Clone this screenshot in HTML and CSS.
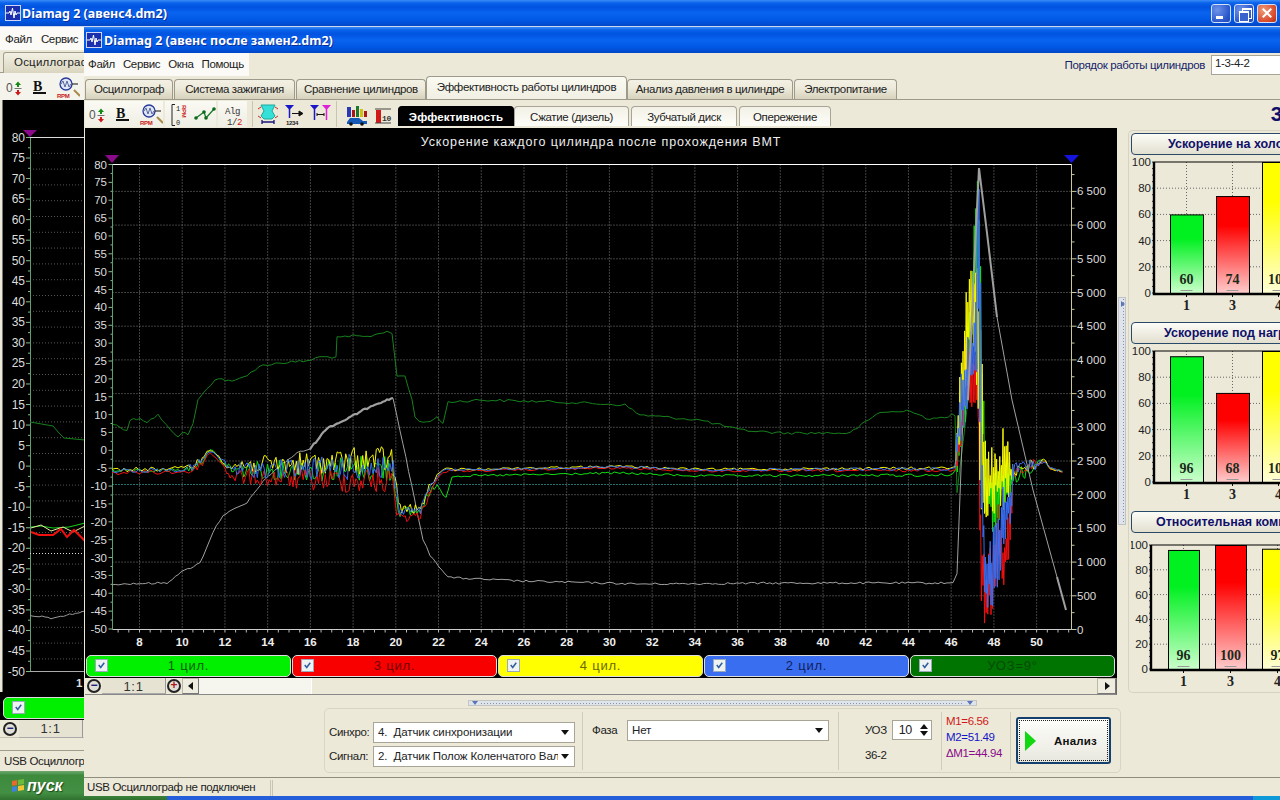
FILE: index.html
```html
<!DOCTYPE html>
<html lang="ru">
<head>
    <meta charset="UTF-8">
    <meta name="viewport" content="width=device-width, initial-scale=1.0">
    <title>Diamag 2</title>
    <link rel="stylesheet" href="styles.css">
</head>
<body>
    <svg class="defs" width="0" height="0">
        <symbol id="app-icon" viewBox="0 0 16 16">
            <rect x="0.5" y="0.5" width="15" height="15" fill="#1a2fb0" stroke="#cfd6f5"/>
            <path d="M1 8h3l1-2 1 4 1.500-7 1.500 10 1-7 1 4 1-2h3" fill="none" stroke="#fff"/>
        </symbol>
        <symbol id="ico-zero" viewBox="0 0 24 26">
            <text x="4" y="18" class="ico-text">0</text>
            <path d="M13 11l3-3.500 3 3.500h-2v2h-2v-2z" fill="#138a13"/>
            <path d="M12.500 14.500h7" stroke="#777"/>
            <path d="M15 16v2h-2l3 3.500 3-3.500h-2v-2z" fill="#d01818"/>
        </symbol>
        <symbol id="ico-bold" viewBox="0 0 26 26">
            <text x="7" y="17" class="ico-b">B</text>
            <path d="M7 19h13" stroke="#111" stroke-width="2"/>
        </symbol>
        <symbol id="ico-rpm" viewBox="0 0 28 26">
            <path d="M22 16l6 6" stroke="#a98a4a" stroke-width="2"/>
            <circle cx="14" cy="10" r="6" fill="#dfe6f5" stroke="#2a3a9a" stroke-width="1.300"/>
            <path d="M9 10l2-3 2 6 2-6 2 6 2-3" fill="none" stroke="#5a6a9a"/>
            <path d="M20 10h6" stroke="#111"/>
            <text x="5" y="24" class="ico-rpm-text">RPM</text>
        </symbol>
        <symbol id="ico-range" viewBox="0 0 25 26">
            <path d="M10 3.500H7v21h3" fill="none" stroke="#222"/>
            <text x="11" y="10" class="ico-small">1</text>
            <text x="11" y="24" class="ico-small">0</text>
            <text transform="translate(17 4) rotate(90)" class="ico-rpm-text">RPM</text>
        </symbol>
        <symbol id="ico-zigzag" viewBox="0 0 26 26">
            <path d="M6 17l8-6 2 6 8-9" fill="none" stroke="#1a7a2a" stroke-width="1.300"/>
            <circle cx="6" cy="17" r="1.800" fill="#0d6a1d"/>
            <circle cx="14" cy="11" r="1.800" fill="#0d6a1d"/>
            <circle cx="16" cy="17" r="1.800" fill="#0d6a1d"/>
            <circle cx="24" cy="8" r="1.800" fill="#0d6a1d"/>
        </symbol>
        <symbol id="ico-alg" viewBox="0 0 29 26">
            <text x="7" y="13" class="ico-alg">Alg</text>
            <text x="9" y="24" class="ico-alg">1/<tspan fill="#d01818">2</tspan></text>
        </symbol>
        <symbol id="ico-lift" viewBox="0 0 26 26">
            <path d="M6 4h14l-3 6 3 5-3 3H9l-3-3 3-5z" fill="#35e0d8" stroke="#1aa9a0"/>
            <path d="M3 8l3-2M23 8l-3-2M3 15l3 2M23 15l-3 2" stroke="#d02828"/>
            <path d="M7 21h12M7 19v4M19 19v4" stroke="#14147a" stroke-width="1.300"/>
        </symbol>
        <symbol id="ico-cursor" viewBox="0 0 26 26">
            <path d="M4 4h9l-4.500 5z" fill="#1818c8"/>
            <path d="M8.500 8v9" stroke="#1818c8" stroke-width="1.500"/>
            <path d="M11 12.500h9M18 10l4 2.500-4 2.500z" stroke="#111" fill="#111"/>
            <text x="5" y="24" class="ico-tiny">1234</text>
        </symbol>
        <symbol id="ico-delta" viewBox="0 0 26 26">
            <path d="M3 4h9l-4.500 5z" fill="#1818c8"/>
            <path d="M7.500 8v11" stroke="#1818c8" stroke-width="1.500"/>
            <path d="M15 4h9l-4.500 5z" fill="#e020d8"/>
            <path d="M19.500 8v11" stroke="#e020d8" stroke-width="1.500"/>
            <path d="M10 13.500h7M10 12v3M17 12v3" stroke="#111"/>
        </symbol>
        <symbol id="ico-car" viewBox="0 0 34 26">
            <path d="M8 6h4v10H8z" fill="#2a3ab0"/>
            <path d="M13 9h3v7h-3z" fill="#a81818"/>
            <path d="M17 5h3v11h-3z" fill="#1a7a2a"/>
            <path d="M21 8h3v8h-3z" fill="#d0c018"/>
            <path d="M25 10h3v6h-3z" fill="#a81818"/>
            <path d="M8 21l3-4h9l4 3h4v3H8z" fill="#1458b8"/>
            <circle cx="12" cy="23" r="1.800" fill="#111"/>
            <circle cx="23" cy="23" r="1.800" fill="#111"/>
        </symbol>
        <symbol id="ico-ten" viewBox="0 0 20 26">
            <path d="M3 9h5v13H3z" fill="#d01818"/>
            <path d="M2 8h16M2 22h16" stroke="#444"/>
            <text x="9" y="20" class="ico-ten">10</text>
        </symbol>
        <symbol id="check-mark" viewBox="0 0 14 14">
            <path d="M3.500 6.500l2.500 3 4.500-6" fill="none" stroke="#2f5f9f" stroke-width="2"/>
        </symbol>
    </svg>

    <!-- back window -->
    <div class="window window-back">
        <div class="titlebar">
            <svg class="app-icon"><use href="#app-icon"/></svg>
            <span class="title">Diamag 2 (авенс4.dm2)</span>
            <div class="win-buttons">
                <span class="win-btn win-min"></span>
                <span class="win-btn win-restore"></span>
                <span class="win-btn win-close"></span>
            </div>
        </div>
        <div class="back-menu">
            <span>Файл</span><span>Сервис</span>
        </div>
        <div class="back-tabs"><span class="back-tab">Осциллограф</span></div>
        <div class="back-toolbar">
            <svg width="24" height="26"><use href="#ico-zero"/></svg>
            <svg width="26" height="26"><use href="#ico-bold"/></svg>
            <svg width="28" height="26"><use href="#ico-rpm"/></svg>
        </div>
        <div class="back-scope"><svg id="backChart" width="82" height="590" viewBox="2 101 82 590"></svg></div>
        <div class="back-legend">
            <div class="legend-item legend-green">
                <span class="check"><svg><use href="#check-mark"/></svg></span>
            </div>
        </div>
        <div class="back-zoom">
            <span class="round-btn">&minus;</span>
            <span class="zoom-value">1:1</span>
        </div>
        <div class="back-status"><span>USB Осциллограф</span></div>
    </div>

    <div class="taskbar">
        <div class="start">
            <svg class="flag" viewBox="0 0 14 14">
                <path d="M1 2l5-1v5l-5 1z" fill="#e8692a"/>
                <path d="M7 1l6-1v5l-6 1z" fill="#6cbb3c"/>
                <path d="M1 8l5-1v5l-5 1z" fill="#3f82e0"/>
                <path d="M7 7l6-1v5l-6 1z" fill="#f2c531"/>
            </svg>
            <span>пуск</span>
        </div>
        <div class="tray"></div>
    </div>

    <!-- front window -->
    <div class="window window-front">
        <div class="titlebar">
            <svg class="app-icon"><use href="#app-icon"/></svg>
            <span class="title">Diamag 2 (авенс после замен2.dm2)</span>
        </div>

        <div class="menubar">
            <div class="menu">
                <span>Файл</span><span>Сервис</span><span>Окна</span><span>Помощь</span>
            </div>
            <label class="cyl-order">Порядок работы цилиндров</label>
            <div class="cyl-input">1-3-4-2</div>
        </div>

        <div class="tabs">
            <span class="tab tab-scope">Осциллограф</span>
            <span class="tab tab-spark">Система зажигания</span>
            <span class="tab tab-compare">Сравнение цилиндров</span>
            <span class="tab tab-active">Эффективность работы цилиндров</span>
            <span class="tab tab-press">Анализ давления в цилиндре</span>
            <span class="tab tab-power">Электропитание</span>
        </div>

        <div class="toolbar">
            <div class="tb-group tb-light">
                <svg width="24" height="26"><use href="#ico-zero"/></svg>
                <svg width="26" height="26"><use href="#ico-bold"/></svg>
                <svg width="28" height="26"><use href="#ico-rpm"/></svg>
            </div>
            <div class="tb-group tb-light">
                <svg width="25" height="26"><use href="#ico-range"/></svg>
                <svg width="26" height="26"><use href="#ico-zigzag"/></svg>
            </div>
            <div class="tb-group tb-light tb-alg">
                <svg width="29" height="26"><use href="#ico-alg"/></svg>
            </div>
            <div class="tb-group tb-sep">
                <svg width="26" height="26"><use href="#ico-lift"/></svg>
                <svg width="26" height="26"><use href="#ico-cursor"/></svg>
                <svg width="26" height="26"><use href="#ico-delta"/></svg>
            </div>
            <div class="tb-group tb-sep">
                <svg width="34" height="26"><use href="#ico-car"/></svg>
                <svg width="20" height="26"><use href="#ico-ten"/></svg>
            </div>
            <div class="subtabs">
                <span class="subtab subtab-active">Эффективность</span>
                <span class="subtab subtab-press">Сжатие (дизель)</span>
                <span class="subtab subtab-disc">Зубчатый диск</span>
                <span class="subtab subtab-adv">Опережение</span>
            </div>
            <span class="big-num">3</span>
        </div>

        <div class="workarea">
            <div class="scope-col">
                <div class="scope">
                    <svg id="mainChart" class="main-chart" width="1032" height="527" viewBox="85 128 1032 527"></svg>
                    <div class="legend">
                        <div class="legend-item legend-green">
                            <span class="check"><svg><use href="#check-mark"/></svg></span>1 цил.
                        </div>
                        <div class="legend-item legend-red">
                            <span class="check"><svg><use href="#check-mark"/></svg></span>3 цил.
                        </div>
                        <div class="legend-item legend-yellow">
                            <span class="check"><svg><use href="#check-mark"/></svg></span>4 цил.
                        </div>
                        <div class="legend-item legend-blue">
                            <span class="check"><svg><use href="#check-mark"/></svg></span>2 цил.
                        </div>
                        <div class="legend-item legend-uoz">
                            <span class="check"><svg><use href="#check-mark"/></svg></span>УОЗ=9°
                        </div>
                    </div>
                </div>
                <div class="scrollrow">
                    <span class="round-btn">&minus;</span>
                    <span class="zoom-value">1:1</span>
                    <span class="round-btn round-plus">+</span>
                    <span class="scroll-arrow arrow-left"></span>
                    <span class="scroll-track"></span>
                    <span class="scroll-thumb"></span>
                    <span class="scroll-arrow arrow-right"></span>
                </div>
            </div>

            <div class="vsplit"><span class="vsplit-arrow"></span></div>

            <div class="cards">
                <section class="card">
                    <h3 class="card-title title-idle">Ускорение на холостом ходу</h3>
                    <svg class="bars" id="bars1" width="150" height="167"></svg>
                </section>
                <section class="card">
                    <h3 class="card-title title-load">Ускорение под нагрузкой</h3>
                    <svg class="bars" id="bars2" width="150" height="167"></svg>
                </section>
                <section class="card">
                    <h3 class="card-title title-comp">Относительная компрессия</h3>
                    <svg class="bars" id="bars3" width="150" height="167"></svg>
                </section>
            </div>
        </div>

        <div class="hsplit"><span class="hsplit-arrow"></span><span class="hsplit-dots"></span><span class="hsplit-arrow"></span></div>

        <div class="panel">
            <div class="panel-group group-sync">
                <div class="field-row">
                    <span class="field-label">Синхро:</span>
                    <div class="combo"><span class="combo-text">4.&nbsp; Датчик синхронизации</span><i class="combo-arrow"></i></div>
                </div>
                <div class="field-row">
                    <span class="field-label">Сигнал:</span>
                    <div class="combo"><span class="combo-text">2.&nbsp; Датчик Полож Коленчатого Вала</span><i class="combo-arrow"></i></div>
                </div>
            </div>
            <div class="panel-group group-phase">
                <span class="field-label">Фаза</span>
                <div class="combo combo-wide"><span class="combo-text">Нет</span><i class="combo-arrow"></i></div>
            </div>
            <div class="panel-group group-uoz">
                <div class="uoz-row">
                    <span>УОЗ</span>
                    <div class="spinner">10<span class="spin-arrows"><i class="spin-up"></i><i class="spin-down"></i></span></div>
                </div>
                <span>36-2</span>
            </div>
            <div class="panel-group group-m">
                <span class="m1">M1=6.56</span>
                <span class="m2">M2=51.49</span>
                <span class="dm1">&Delta;M1=44.94</span>
            </div>
            <button class="run-btn" type="button"><i class="run-arrow"></i><span>Анализ</span></button>
        </div>

        <div class="statusbar">
            <span class="status-main">USB Осциллограф не подключен</span>
        </div>
    </div>

    <script src="app.js"></script>
</body>
</html>
```

FILE: styles.css
```css
* {
  box-sizing: border-box;
}

html, body {
  margin: 0;
  height: 100%;
}

body {
  position: relative;
  width: 1280px;
  height: 800px;
  overflow: hidden;
  font-family: 'Liberation Sans', Arial, sans-serif;
  font-size: 11.5px;
  letter-spacing: -0.35px;
  color: #222;
  background: #245edb;
}

.defs {
  position: absolute;
}

/* icon text */
.ico-text { font: 12px 'Liberation Sans', sans-serif; fill: #555; }
.ico-b { font: bold 14px 'Liberation Serif', serif; fill: #111; }
.ico-rpm-text { font: bold 6px 'Liberation Sans', sans-serif; fill: #c81818; }
.ico-small { font: 7px 'Liberation Mono', monospace; fill: #222; }
.ico-alg { font: 9px 'Liberation Mono', monospace; fill: #333; }
.ico-tiny { font: bold 6px 'Liberation Sans', sans-serif; fill: #222; }
.ico-ten { font: bold 8px 'Liberation Mono', monospace; fill: #333; }

/* windows */
.window {
  position: absolute;
  background: #ece9d8;
  overflow: hidden;
}

.window-back {
  left: 0;
  top: 0;
  width: 1280px;
  height: 771px;
}

.window-front {
  left: 84px;
  top: 27px;
  width: 1196px;
  height: 769px;
  display: flex;
  flex-direction: column;
}

.titlebar {
  height: 26px;
  flex: none;
  display: flex;
  align-items: center;
  padding-left: 2px;
  background: linear-gradient(#3a8cf6 0, #0a62ea 3px, #0053e0 7px, #0a64f0 13px, #0058e4 20px, #0047c8 26px);
}

.window-back .titlebar {
  padding-left: 5px;
  border-bottom: 1px solid #cdd8ee;
  height: 27px;
  position: relative;
}

.app-icon {
  width: 16px;
  height: 16px;
  flex: none;
}

.title {
  margin-left: 1px;
  font: bold 12.5px 'Noto Sans', sans-serif;
  color: #fff;
  letter-spacing: 0;
  text-shadow: 1px 1px 0 #0a2f9a;
  white-space: nowrap;
}

.window-front .title {
  margin-left: 2px;
}

.win-buttons {
  margin-left: auto;
  margin-right: 3px;
  display: flex;
  gap: 3px;
}

.win-btn {
  position: relative;
  width: 20px;
  height: 19px;
  border: 1px solid #d5e1f8;
  border-radius: 3px;
  background: radial-gradient(circle at 30% 30%, #6f94e8, #2a56cc 70%, #2347b0);
}

.win-close {
  background: radial-gradient(circle at 30% 30%, #ee9a78, #d8482a 70%, #b03018);
}

.win-min::after {
  content: '';
  position: absolute;
  left: 4px;
  bottom: 3px;
  width: 7px;
  height: 3px;
  background: #fff;
}

.win-restore::before, .win-restore::after {
  content: '';
  position: absolute;
  width: 8px;
  height: 8px;
  border: 1px solid #fff;
  border-top-width: 2px;
}

.win-restore::before {
  left: 7px;
  top: 3px;
}

.win-restore::after {
  left: 4px;
  top: 6px;
  background: #3a62cc;
}

.win-close::before, .win-close::after {
  content: '';
  position: absolute;
  left: 3px;
  top: 7px;
  width: 12px;
  height: 2px;
  background: #fff;
  transform: rotate(45deg);
}

.win-close::after {
  transform: rotate(-45deg);
}

/* back window parts */
.back-menu {
  height: 23px;
  display: flex;
  align-items: center;
  gap: 9px;
  padding-left: 5px;
  background: #fbfaf6;
}

.back-tabs {
  height: 23px;
  padding: 2px 0 0 3px;
  border-bottom: 1px solid #a09d8c;
}

.back-tab {
  display: block;
  width: 90px;
  height: 21px;
  padding: 3px 0 0 10px;
  letter-spacing: 0.2px;
  border: 1px solid #a09d8c;
  border-bottom: none;
  border-radius: 3px 3px 0 0;
  background: linear-gradient(#f3f1e4, #d9d5bf);
}

.back-toolbar {
  height: 27px;
  display: flex;
  align-items: center;
  padding-left: 2px;
  background: #f5f4ec;
}

.back-scope {
  height: 592px;
  margin-left: 2px;
  padding-top: 1px;
  background: #000;
  border-left: 1px solid #777;
  width: 110px;
}

.back-scope svg {
  display: block;
}

.back-legend {
  height: 28px;
  width: 110px;
  padding: 5px 0 0 3px;
  background: #000;
}

.back-legend .legend-item {
  width: 200px;
  height: 22px;
}

.back-zoom {
  height: 18px;
  display: flex;
  align-items: center;
  padding-left: 3px;
  border-bottom: 1px solid #c8c5b4;
}

.back-zoom .zoom-value {
  width: 64px;
  margin-left: 2px;
}

.back-status {
  margin-top: 12px;
  height: 21px;
  padding: 4px 0 0 4px;
  border-top: 1px solid #a09d8c;
}

/* taskbar */
.taskbar {
  position: absolute;
  left: 0;
  right: 0;
  bottom: 0;
  height: 29px;
  display: flex;
  background: linear-gradient(#3f8cf3, #245edb 20%, #245edb);
}

.start {
  width: 167px;
  display: flex;
  align-items: center;
  gap: 2px;
  padding-left: 11px;
  color: #fff;
  letter-spacing: 0;
  font: italic bold 16px 'Liberation Sans', sans-serif;
  text-shadow: 1px 1px 1px #1a4a1a;
  background: linear-gradient(#6fa86f, #3d8a3d 15%, #438f43 75%, #2f702f);
}

.flag {
  width: 14px;
  height: 14px;
}

.tray {
  margin-left: auto;
  width: 27px;
  background: #0e9ad8;
}

/* menu */
.menubar {
  height: 23px;
  flex: none;
  display: flex;
  align-items: center;
}

.menu {
  width: 165px;
  height: 23px;
  display: flex;
  align-items: center;
  gap: 8px;
  padding: 0 0 2px 4px;
  background: #fbfaf6;
}

.cyl-order {
  margin-left: auto;
  margin-top: 1px;
  color: #14246a;
}

.cyl-input {
  width: 80px;
  height: 20px;
  margin-left: 6px;
  margin-right: -11px;
  padding: 1px 3px;
  background: #fff;
  border: 1px solid #a8a596;
}

/* tabs */
.tabs {
  height: 24px;
  flex: none;
  display: flex;
  align-items: flex-end;
  padding-left: 1px;
  gap: 1px;
  border-bottom: 1px solid #9d9a8b;
}

.tab {
  height: 20px;
  padding-top: 3px;
  text-align: center;
  white-space: nowrap;
  border: 1px solid #9d9a8b;
  border-bottom: none;
  border-radius: 4px 4px 0 0;
  background: linear-gradient(#f3f1e4, #eeebdc 40%, #d6d2bc);
}

.tab-scope { width: 88px; }
.tab-spark { width: 121px; }
.tab-compare { width: 130px; }
.tab-press { width: 166px; }
.tab-power { width: 103px; }

.tab-active {
  width: 201px;
  height: 23px;
  margin: 0 -1px 0 -1px;
  padding-top: 4px;
  background: linear-gradient(#fbfaf2, #f1efe3);
}

/* toolbar */
.toolbar {
  height: 27px;
  flex: none;
  display: flex;
  align-items: center;
  padding-left: 1px;
  gap: 1px;
  background: #ece9d8;
}

.tb-group {
  display: flex;
  height: 26px;
}

.tb-light {
  background: linear-gradient(#fafaf4, #efeee4);
  margin-right: 1px;
}

.tb-alg {
  margin-right: 4px;
}

.tb-sep {
  padding-left: 2px;
  margin-right: 2px;
  border-left: 1px solid #c8c5b4;
}

.tb-group svg {
  display: block;
  flex: none;
}

.subtabs {
  display: flex;
  align-items: flex-end;
  align-self: flex-end;
  height: 21px;
  margin: 0 0 1px 2px;
}

.subtab {
  height: 20px;
  padding-top: 4px;
  text-align: center;
  white-space: nowrap;
  border: 1px solid #a8a596;
  border-bottom: none;
  border-radius: 4px 4px 0 0;
  background: linear-gradient(#f3f1e6, #fdfdf8);
}

.subtab-active {
  width: 116px;
  color: #fff;
  font-weight: bold;
  letter-spacing: 0.1px;
  background: #000;
  border-color: #000;
}

.subtab-press { width: 115px; margin-right: 2px; }
.subtab-disc { width: 106px; margin-right: 2px; }
.subtab-adv { width: 92px; }

.big-num {
  margin-left: auto;
  margin-right: -2px;
  color: #10106a;
  font: bold 21px 'Liberation Sans', sans-serif;
}

/* work area */
.workarea {
  height: 573px;
  flex: none;
  display: flex;
  padding-top: 1px;
}

.scope-col {
  width: 1034px;
  flex: none;
  padding-left: 1px;
}

.scope {
  width: 1032px;
  height: 550px;
  background: #000;
}

.main-chart {
  display: block;
}

.legend {
  display: flex;
  gap: 1px;
  padding-left: 1px;
}

.legend-item {
  position: relative;
  width: 205px;
  height: 22px;
  border-radius: 5px;
  border: 1px solid #ddd;
  text-align: center;
  font-size: 13px;
  letter-spacing: 0.8px;
  line-height: 20px;
}

.legend-green { background: #00f000; color: #0c5a0c; }
.legend-red { background: #f80000; color: #700000; }
.legend-yellow { background: #ffff00; color: #6a6a00; }
.legend-blue { background: #3a6ef0; color: #10205e; }
.legend-uoz { background: #007400; color: #064a06; }

.check {
  position: absolute;
  left: 8px;
  top: 3px;
  width: 13px;
  height: 13px;
  background: #eef2f2;
  border: 1px solid #9ab;
}

.check svg {
  display: block;
  width: 11px;
  height: 11px;
}

.scrollrow {
  height: 17px;
  display: flex;
  align-items: stretch;
  margin-right: 1px;
  padding-left: 2px;
  border-right: 1px solid #666;
  border-bottom: 1px solid #888;
}

.round-btn {
  width: 14px;
  height: 14px;
  margin-top: 1px;
  flex: none;
  border: 2px solid #222;
  border-radius: 50%;
  background: #e0dfd6;
  color: #14147a;
  text-align: center;
  letter-spacing: 0;
  font: bold 12px/9px 'Liberation Sans', sans-serif;
}

.round-plus {
  margin: 1px 1px 0 1px;
  color: #b01818;
}

.zoom-value {
  width: 64px;
  margin-left: 1px;
  text-align: center;
  font-size: 13px;
  letter-spacing: 0.7px;
  line-height: 17px;
  color: #333;
  background: #e6e3d3;
  border-right: 1px solid #999;
  border-bottom: 1px solid #aaa;
  flex: none;
}

.scroll-arrow {
  position: relative;
  width: 17px;
  flex: none;
  background: #efede0;
  border: 1px solid #bbb8a6;
  border-right-color: #777;
  border-bottom-color: #777;
}

.scroll-arrow::after {
  content: '';
  position: absolute;
  top: 3px;
  left: 5px;
  border: 4px solid transparent;
  border-left: none;
  border-right: 5px solid #111;
}

.arrow-right {
  width: 19px;
}

.arrow-right::after {
  left: 7px;
  border-left: 5px solid #111;
  border-right: none;
}

.scroll-track {
  width: 112px;
  flex: none;
  background: #f6f5ee;
}

.scroll-thumb {
  flex: 1;
  background: #ece9d8;
  border-left: 1px solid #fff;
}

/* right side */
.vsplit {
  position: relative;
  width: 8px;
  height: 228px;
  flex: none;
  margin-top: 169px;
  margin-left: 0;
  background-color: #dfe3ea;
  background-image: linear-gradient(#8a90a8 50%, transparent 50%);
  background-size: 1px 3px;
  background-position: 4px 10px;
  background-repeat: repeat-y;
  border: 1px solid #bfc2c8;
}

.vsplit-arrow {
  position: absolute;
  top: 3px;
  left: 2px;
  border: 3px solid transparent;
  border-left: 4px solid #5a76b8;
  border-right: none;
}

.cards {
  width: 290px;
  flex: none;
  margin: 2px 0 0 2px;
  height: 563px;
  padding: 2px 0 0 2px;
  border: 1px solid #d6d3c2;
  border-right: none;
  border-radius: 5px 0 0 5px;
}

.card {
  height: 189px;
}

.card-title {
  width: 290px;
  height: 22px;
  margin: 0;
  text-align: left;
  letter-spacing: 0;
  font: bold 12.5px/20px 'Liberation Sans', sans-serif;
  color: #10106a;
  white-space: nowrap;
  border: 1px solid #2a4a6a;
  border-radius: 4px;
  background: linear-gradient(#fdfdf8, #e2dfcf);
}

.title-idle { padding-left: 36px; }
.title-load { padding-left: 32px; }
.title-comp { padding-left: 24px; }

.bars {
  display: block;
}

/* bottom panel */
.hsplit {
  width: 509px;
  height: 6px;
  margin-left: 384px;
  flex: none;
  display: flex;
  align-items: center;
  padding: 0 3px;
  gap: 3px;
  background: #dfe3ea;
  border: 1px solid #c4c5c5;
}

.hsplit-dots {
  flex: 1;
  height: 1px;
  background-image: linear-gradient(90deg, #8a90a8 50%, transparent 50%);
  background-size: 3px 1px;
}

.hsplit-arrow {
  border: 3px solid transparent;
  border-top: 4px solid #5a76b8;
  border-bottom: none;
}

.panel {
  width: 797px;
  height: 65px;
  margin: 2px 0 0 240px;
  flex: none;
  display: flex;
  align-items: center;
  padding-left: 4px;
  border: 1px solid #d8d5c4;
  border-radius: 5px;
}

.panel-group {
  height: 58px;
  flex: none;
  border-right: 1px solid #d0cdbc;
}

.group-sync {
  width: 254px;
  display: flex;
  flex-direction: column;
  justify-content: flex-end;
  gap: 3px;
  padding-bottom: 3px;
}

.field-row {
  display: flex;
  align-items: center;
  gap: 4px;
}

.field-label {
  width: 40px;
}

.combo {
  width: 202px;
  height: 21px;
  display: flex;
  align-items: center;
  background: #fff;
  border: 1px solid #a8a596;
  padding-left: 4px;
  overflow: hidden;
}

.combo-text {
  flex: 1;
  overflow: hidden;
  white-space: nowrap;
  letter-spacing: -0.1px;
}

.combo-arrow {
  flex: none;
  width: 0;
  margin: 0 5px 0 3px;
  border: 4px solid transparent;
  border-top: 5px solid #111;
  border-bottom: none;
}

.group-phase {
  width: 256px;
  display: flex;
  gap: 0;
  padding: 8px 0 0 9px;
}

.group-phase .field-label {
  width: 35px;
  margin-top: 4px;
}

.group-uoz {
  width: 103px;
  padding: 8px 0 0 26px;
  display: flex;
  flex-direction: column;
  gap: 9px;
}

.uoz-row {
  display: flex;
  align-items: center;
  gap: 5px;
}

.spinner {
  width: 40px;
  height: 20px;
  display: flex;
  align-items: center;
  justify-content: space-between;
  padding: 0 3px 0 6px;
  font-size: 12.5px;
  background: #fff;
  border: 1px solid #a8a596;
}

.spin-arrows {
  display: flex;
  flex-direction: column;
  gap: 2px;
}

.spin-up, .spin-down {
  border: 4px solid transparent;
  border-bottom: 5px solid #111;
  border-top: none;
}

.spin-down {
  border-top: 5px solid #111;
  border-bottom: none;
}

.group-m {
  width: 69px;
  padding: 3px 0 0 4px;
  display: flex;
  flex-direction: column;
  gap: 3px;
  line-height: 13px;
  white-space: nowrap;
}

.m1 { color: #d01818; }
.m2 { color: #1414c8; }
.dm1 { color: #8a0a8a; }

.run-btn {
  width: 95px;
  height: 47px;
  margin-left: 5px;
  display: flex;
  align-items: center;
  padding: 0 0 0 7px;
  border: 2px solid #14406e;
  outline: 1px dotted #222;
  outline-offset: -4px;
  border-radius: 3px;
  font: bold 11.5px 'Liberation Sans', sans-serif;
  letter-spacing: 0.2px;
  color: #111;
  background: linear-gradient(#fdfdfa, #e9e8df);
}

.run-arrow {
  width: 0;
  margin-right: 18px;
  border: 10px solid transparent;
  border-left: 11px solid #12d812;
  border-right: none;
}

/* status */
.statusbar {
  height: 19px;
  margin-top: auto;
  flex: none;
  display: flex;
  border-top: 1px solid #8f8d7e;
  padding-top: 2px;
}

.status-main {
  width: 189px;
  padding: 1px 0 0 3px;
  white-space: nowrap;
  border-right: 3px double #c8c5b4;
}
```

FILE: app.js
```js
// charts of the two Diamag windows, all coordinates are page pixels
const NS = 'http://www.w3.org/2000/svg';

function add(parent, tag, attrs, text) {
  const node = document.createElementNS(NS, tag);
  for (const k in attrs) node.setAttribute(k, attrs[k]);
  if (text !== undefined) node.textContent = text;
  parent.appendChild(node);
  return node;
}

let seed = 12345;
function rnd() {
  seed = (seed * 1103515245 + 12345) % 2147483648;
  return seed / 2147483648;
}
const noise = () => rnd() * 2 - 1;

function line(svg, pts, color, width) {
  add(svg, 'polyline', {
    points: pts.map(p => p[0].toFixed(1) + ',' + p[1].toFixed(1)).join(' '),
    fill: 'none', stroke: color, 'stroke-width': width || 1
  });
}

// walk along a polyline and shake it a little
function jitter(pts, step, amp) {
  const out = [];
  for (let i = 0; i < pts.length - 1; i++) {
    const a = pts[i], b = pts[i + 1];
    const n = Math.max(1, Math.round((b[0] - a[0]) / step));
    for (let j = 0; j < n; j++) {
      const t = j / n;
      out.push([a[0] + (b[0] - a[0]) * t, a[1] + (b[1] - a[1]) * t + noise() * amp]);
    }
  }
  out.push(pts[pts.length - 1]);
  return out;
}

function lerpTable(table, x) {
  let i = 0;
  while (i < table.length - 2 && x > table[i + 1][0]) i++;
  const a = table[i], b = table[i + 1];
  const t = Math.min(1, Math.max(0, (x - a[0]) / (b[0] - a[0])));
  return a.slice(1).map((v, k) => v + (b[k + 1] - v) * t);
}

const LABEL = { 'font-family': 'Liberation Sans', 'font-size': 11.5, 'letter-spacing': 0, fill: '#ddd' };
const DOT = { stroke: '#808080', 'stroke-dasharray': '1 2', 'stroke-width': 1 };

/* main chart */
const main = document.getElementById('mainChart');
const X = v => 139.5 + (v - 8) * 21.36;
const YL = v => 164.5 + (80 - v) * 3.573;
const YR = r => 629.5 - r * 0.0674;
const PLOT = { l: 112.5, r: 1071.5, t: 164.5, b: 629.5 };

add(main, 'text', Object.assign({}, LABEL, {
  x: 601, y: 146, 'text-anchor': 'middle', 'font-size': 12.5, 'letter-spacing': 0.88, fill: '#eee'
}), 'Ускорение каждого цилиндра после прохождения ВМТ');

for (let v = 8; v <= 50; v += 2) {
  add(main, 'line', Object.assign({ x1: X(v), x2: X(v), y1: PLOT.t, y2: PLOT.b }, DOT));
  add(main, 'text', Object.assign({}, LABEL, {
    x: X(v), y: 646, 'text-anchor': 'middle', 'font-weight': 'bold', fill: '#eee'
  }), v);
}
for (let v = 7; v <= 51.5; v += 0.5) {
  add(main, 'line', { x1: X(v), x2: X(v), y1: PLOT.b, y2: PLOT.b + 3, stroke: '#bbb' });
}
for (let r = 500; r <= 6500; r += 500) {
  add(main, 'line', Object.assign({ x1: PLOT.l, x2: PLOT.r, y1: YR(r), y2: YR(r) }, DOT));
}
for (let r = 0; r <= 6500; r += 500) {
  const txt = r >= 1000 ? Math.floor(r / 1000) + ' ' + String(r % 1000).padStart(3, '0') : r;
  add(main, 'text', Object.assign({}, LABEL, { x: 1077, y: YR(r) + 4 }), txt);
  add(main, 'line', { x1: PLOT.r, x2: PLOT.r + 5, y1: YR(r), y2: YR(r), stroke: '#c8c89a' });
  add(main, 'line', { x1: PLOT.r, x2: PLOT.r + 3, y1: YR(r + 250), y2: YR(r + 250), stroke: '#c8c89a' });
}
for (let v = 80; v >= -50; v -= 5) {
  add(main, 'text', Object.assign({}, LABEL, { x: 107, y: YL(v) + 4, 'text-anchor': 'end' }), v);
  add(main, 'line', { x1: PLOT.l - 4, x2: PLOT.l, y1: YL(v), y2: YL(v), stroke: '#7fbf8f' });
  if (v > -50) add(main, 'line', { x1: PLOT.l - 2, x2: PLOT.l, y1: YL(v - 2.5), y2: YL(v - 2.5), stroke: '#7fbf8f' });
}
add(main, 'line', { x1: PLOT.l, x2: PLOT.l, y1: PLOT.t, y2: PLOT.b, stroke: '#5f9f6f' });
add(main, 'line', { x1: PLOT.r, x2: PLOT.r, y1: PLOT.t, y2: PLOT.b, stroke: '#c8c89a' });
add(main, 'line', { x1: PLOT.l, x2: PLOT.r, y1: PLOT.t, y2: PLOT.t, stroke: '#fff' });
add(main, 'line', { x1: PLOT.l, x2: PLOT.r, y1: PLOT.b, y2: PLOT.b, stroke: '#ccc' });
add(main, 'line', {
  x1: PLOT.l, x2: PLOT.r, y1: 484.5, y2: 484.5, stroke: '#40e0d8', 'stroke-dasharray': '1 2'
});

add(main, 'path', { d: 'M105 155h14l-7 8z', fill: '#8a0a8a' });
add(main, 'path', { d: 'M1064 155h15l-7.500 8z', fill: '#1414e0' });

// UOZ curve
line(main, jitter([
  [113, 424], [127, 430], [130, 420], [140, 418], [147, 422], [158, 415], [170, 430], [178, 436],
  [182, 432], [188, 435], [193, 423], [198, 400], [215, 379], [222, 379], [232, 382], [243, 377],
  [263, 365], [280, 363], [307, 361], [320, 357], [336, 357], [337, 338], [353, 336], [367, 337],
  [387, 331], [392, 333], [395, 360], [397, 376], [405, 376], [412, 400], [415, 417], [423, 423],
  [437, 418], [443, 423], [448, 402], [480, 400], [520, 401], [560, 402], [625, 405], [640, 415],
  [700, 420], [740, 430], [780, 433], [850, 433], [880, 412], [900, 412], [910, 410], [930, 420],
  [952, 415], [955, 416], [957, 493], [968, 400], [972, 300]
], 4, 1.3), '#16801c');

// RPM curve
line(main, jitter([
  [112, 584], [167, 583], [178, 574], [200, 563], [213, 532], [223, 515], [247, 503], [260, 485],
  [277, 468], [297, 453], [310, 449]
], 3, 1), '#a0a0a0');
line(main, jitter([[310, 449], [327, 428], [343, 421], [373, 405], [393, 398]], 2, 0.8), '#a0a0a0', 2.2);
line(main, jitter([
  [393, 398], [400, 430], [423, 540], [430, 555], [448, 577], [457, 578], [520, 581], [640, 584],
  [800, 583], [953, 583], [957, 573], [963, 417], [968, 400]
], 3, 1), '#a0a0a0');

const BAND = [
  [112, 471, 3], [180, 470, 3], [192, 468, 5], [203, 460, 4], [211, 450, 3], [222, 462, 4],
  [232, 470, 10], [290, 470, 14], [388, 468, 20], [393, 470, 20], [396, 495, 14], [400, 512, 8],
  [420, 512, 6], [427, 495, 6], [433, 482, 4], [445, 470, 2], [460, 470, 1.5], [620, 467, 1.5],
  [700, 470, 1.5], [950, 469, 2], [955, 467, 2]
];
const SETTLE = [
  [1013, 472, 8], [1020, 468, 7], [1032, 466, 7], [1040, 463, 3], [1044, 460, 2], [1050, 468, 1.5], [1063, 472, 1]
];
const CYL = [
  { color: '#10e010', off: 0, low: 6, spike: [
    [955, 470, 470], [960, 400, 480], [968, 320, 400], [975, 205, 300], [978, 170, 300], [981, 280, 420],
    [986, 460, 540], [996, 450, 530], [1008, 445, 510], [1012, 470, 490], [1014, 470, 490]] },
  { color: '#f01010', off: 9, low: 0, spike: [
    [955, 470, 470], [960, 420, 470], [965, 330, 420], [972, 340, 410], [978, 360, 420], [981, 520, 610],
    [985, 560, 630], [992, 540, 620], [998, 500, 570], [1004, 530, 590], [1010, 490, 550], [1013, 460, 490]] },
  { color: '#f8f800', off: -6, low: 0, spike: [
    [955, 467, 467], [960, 360, 440], [966, 290, 400], [972, 250, 360], [977, 255, 400], [981, 330, 560],
    [985, 440, 530], [995, 440, 520], [1008, 420, 510], [1012, 462, 490], [1014, 462, 480]] },
  { color: '#3a6ef0', off: -1, low: 0, spike: [
    [955, 468, 468], [958, 400, 470], [965, 340, 420], [972, 330, 400], [978, 170, 400], [980, 170, 540],
    [982, 450, 560], [985, 540, 615], [992, 520, 625], [997, 510, 590], [1004, 480, 560], [1011, 470, 520],
    [1013, 460, 490]] }
];
CYL.forEach(c => {
  const pts = [];
  for (let x = 112; x < 955; ) {
    const [y, a] = lerpTable(BAND, x);
    // green falls behind after the dip at 22
    let g = x > 428 ? c.low : 0;
    if (c.low && x > 438 && x < 452) g += 24 * (1 - Math.abs(x - 445) / 7);
    pts.push([x, y + c.off * (a / 14) + noise() * a * 0.75 + g]);
    x += a > 4 ? 1.7 : 3;
  }
  let up = false;
  for (let x = 955; x < 1013; x += 0.8) {
    const [top, bottom] = lerpTable(c.spike, x);
    up = !up;
    const t = rnd() * 0.45;
    pts.push([x, up ? top + (bottom - top) * t : bottom - (bottom - top) * t]);
  }
  for (let x = 1013; x < 1063; x += 1.7) {
    const [y, a] = lerpTable(SETTLE, x);
    pts.push([x, y + noise() * a + (c.low && x < 1035 ? 5 : 0)]);
  }
  line(main, pts, c.color);
});

// RPM peak lies over the cylinders
line(main, [[968, 400], [975, 250], [979, 168], [987, 233], [997, 317]], '#a0a0a0', 2);
line(main, [[997, 317], [1012, 400], [1033, 490], [1057, 577]], '#a0a0a0');
line(main, [[1057, 577], [1066, 610]], '#a0a0a0', 2);

/* part of the back window chart that is still visible */
const back = document.getElementById('backChart');
const YB = v => 137.5 + (80 - v) * 4.108;
for (let y = 137.5; y < 671; y += 15.8) {
  add(back, 'line', { x1: 29, x2: 84, y1: y, y2: y, stroke: '#555', 'stroke-dasharray': '1 2' });
}
for (let v = 80; v >= -50; v -= 5) {
  add(back, 'text', Object.assign({}, LABEL, { x: 24, y: YB(v) + 4, 'text-anchor': 'end', 'font-size': 12 }), v);
  add(back, 'line', { x1: 25, x2: 29, y1: YB(v), y2: YB(v), stroke: '#7fbf8f' });
  if (v > -50) add(back, 'line', { x1: 27, x2: 29, y1: YB(v - 2.5), y2: YB(v - 2.5), stroke: '#7fbf8f' });
}
add(back, 'line', { x1: 29.5, x2: 29.5, y1: 137, y2: 672, stroke: '#5f9f6f' });
add(back, 'line', { x1: 29, x2: 84, y1: 137.5, y2: 137.5, stroke: '#ddd' });
add(back, 'line', { x1: 29, x2: 84, y1: 671.5, y2: 671.5, stroke: '#aaa' });
add(back, 'line', { x1: 29, x2: 84, y1: 553.5, y2: 553.5, stroke: '#ddd', 'stroke-dasharray': '1 2' });
add(back, 'path', { d: 'M22 130h14l-7 7z', fill: '#8a0a8a' });
add(back, 'text', Object.assign({}, LABEL, { x: 75, y: 687, 'font-weight': 'bold' }), '1');
line(back, [[29, 422], [52, 426], [58, 433], [63, 438], [84, 440]], '#16801c');
line(back, jitter([[29, 615], [50, 618], [84, 611]], 3, 1), '#999');
line(back, [[30, 527], [40, 526], [52, 528], [68, 527], [84, 523]], '#18d018');
line(back, [[30, 528], [40, 525], [50, 531], [62, 527], [72, 532], [84, 526]], '#e8e8a0');
line(back, [[30, 532], [38, 535], [52, 535], [60, 529], [66, 537], [73, 530], [84, 541]], '#f01010', 2);

/* bar charts on the right, drawn relative to the card */
const GRADS = { g: ['#00f020', '#ccffcc'], r: ['#ff0000', '#ffcccc'], y: ['#ffff00', '#ffffd8'] };

function bars(id, o) {
  const svg = document.getElementById(id);
  const defs = add(svg, 'defs', {});
  Object.keys(GRADS).forEach(k => {
    const g = add(defs, 'linearGradient', { id: id + k, x1: 0, y1: 0, x2: 0, y2: 1 });
    add(g, 'stop', { offset: '0.3', 'stop-color': GRADS[k][0] });
    add(g, 'stop', { offset: '1', 'stop-color': GRADS[k][1] });
  });
  const Y = v => o.top + (100 - v) * o.h / 100;
  for (let v = 0; v <= 100; v += 20) {
    add(svg, 'text', { x: o.left - 3, y: Y(v) + 4, 'text-anchor': 'end', 'font-family': 'Liberation Sans', 'font-size': 11.5, 'letter-spacing': 0, fill: '#222' }, v);
    if (v > 0 && v < 100) {
      add(svg, 'line', { x1: o.left, x2: 150, y1: Y(v), y2: Y(v), stroke: '#666', 'stroke-dasharray': '1 2' });
    }
  }
  for (let v = 0; v <= 100; v += 5) {
    add(svg, 'line', { x1: o.left - 2, x2: o.left, y1: Y(v), y2: Y(v), stroke: '#333' });
  }
  o.values.forEach((v, i) => {
    const x = o.first + i * o.pitch;
    const mid = x + o.w / 2;
    const bold = { 'text-anchor': 'middle', 'font-family': 'Liberation Serif', 'font-weight': 'bold', 'font-size': 14, 'letter-spacing': 0 };
    add(svg, 'line', { x1: mid, x2: mid, y1: o.top, y2: Y(0), stroke: '#666', 'stroke-dasharray': '1 2' });
    add(svg, 'rect', { x: x + 0.5, y: Y(v) + 0.5, width: o.w, height: Y(0) - Y(v), fill: 'url(#' + id + 'gry'[i] + ')', stroke: '#000' });
    add(svg, 'line', { x1: mid - 6, x2: mid + 6, y1: Y(0) - 2.5, y2: Y(0) - 2.5, stroke: '#999' });
    add(svg, 'text', Object.assign({ x: mid, y: Y(0) - 9, fill: '#1c2a1c' }, bold), v);
    add(svg, 'text', Object.assign({ x: mid, y: Y(0) + 17, fill: '#222' }, bold), ['1', '3', '4'][i]);
    add(svg, 'line', { x1: mid, x2: mid, y1: Y(0), y2: Y(0) + 4, stroke: '#111' });
  });
  add(svg, 'path', { d: 'M' + o.left + ' ' + o.top + 'V' + (Y(0) + 1) + 'H150', fill: 'none', stroke: '#000', 'stroke-width': 2.4 });
  add(svg, 'line', { x1: o.left, x2: 150, y1: o.top, y2: o.top, stroke: '#000' });
}

bars('bars1', { values: [60, 74, 100], top: 7, h: 131, left: 23, first: 39, pitch: 46, w: 33 });
bars('bars2', { values: [96, 68, 100], top: 7, h: 131, left: 23, first: 39, pitch: 46, w: 33 });
bars('bars3', { values: [96, 100, 97], top: 12, h: 124, left: 20, first: 37, pitch: 47, w: 31 });
```
